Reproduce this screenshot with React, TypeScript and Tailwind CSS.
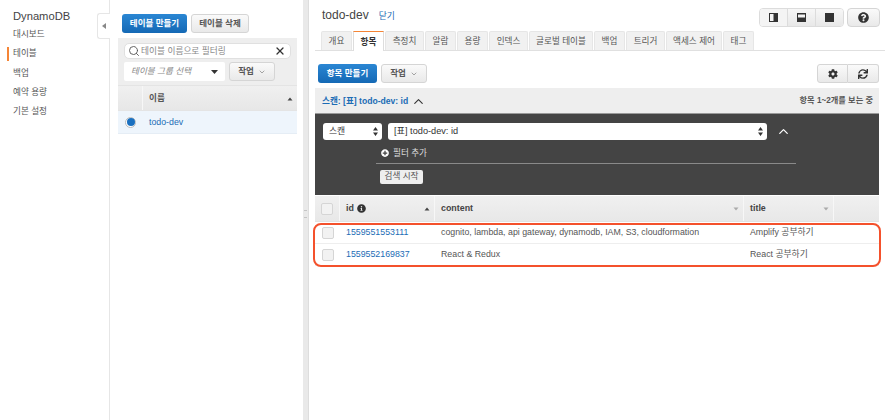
import { Search, X, ChevronDown, ChevronUp } from "lucide-react";
import { FaCog, FaSync, FaQuestionCircle, FaInfoCircle, FaPlusCircle } from "react-icons/fa";

const font = "font-['Liberation_Sans','Noto_Sans_CJK_KR',sans-serif]";

const navItems = ["대시보드", "테이블", "백업", "예약 용량", "기본 설정"];

const tabs = [
  { label: "개요", w: "w-[31px]" },
  { label: "항목", w: "w-[31px]", active: true },
  { label: "측정치", w: "w-[39px]" },
  { label: "알람", w: "w-[31px]" },
  { label: "용량", w: "w-[31px]" },
  { label: "인덱스", w: "w-[39px]" },
  { label: "글로벌 테이블", w: "w-[64px]" },
  { label: "백업", w: "w-[31px]" },
  { label: "트리거", w: "w-[39px]" },
  { label: "액세스 제어", w: "w-[56px]" },
  { label: "태그", w: "w-[31px]" },
];

const rows = [
  { id: "1559551553111", content: "cognito, lambda, api gateway, dynamodb, IAM, S3, cloudformation", title: "Amplify 공부하기" },
  { id: "1559552169837", content: "React & Redux", title: "React 공부하기" },
];

function GrayButton({ children, className = "" }: { children: React.ReactNode; className?: string }) {
  return (
    <button className={`flex h-[19px] items-center justify-center gap-1 rounded-[3px] border border-[#d5d5d5] bg-linear-to-b from-[#fafafa] to-[#e9e9e9] text-[8.5px] font-bold text-[#555] ${className}`}>
      {children}
    </button>
  );
}

function BlueButton({ children, className = "" }: { children: React.ReactNode; className?: string }) {
  return (
    <button className={`flex h-[19px] items-center justify-center rounded-[3px] bg-linear-to-b from-[#2a86d3] to-[#1469b5] text-[8.5px] font-bold text-white ${className}`}>
      {children}
    </button>
  );
}

function SortCaret({ up = false }: { up?: boolean }) {
  return (
    <svg width="6" height="4" viewBox="0 0 6 4" className={up ? "fill-[#444]" : "fill-[#aaa]"}>
      <path d={up ? "M3 0.5 L5.5 3.5 H0.5 Z" : "M0.5 0.5 H5.5 L3 3.5 Z"} />
    </svg>
  );
}

function UpDown() {
  return (
    <svg width="5" height="9" viewBox="0 0 5 9" className="fill-[#333]">
      <path d="M2.5 0 L5 3.6 H0 Z M2.5 9 L0 5.4 H5 Z" />
    </svg>
  );
}

function PaneIcon({ kind }: { kind: "left" | "bottom" | "full" }) {
  return (
    <svg width="9" height="9" viewBox="0 0 9 9">
      <rect x="0" y="0" width="9" height="9" fill="#333" />
      {kind === "left" && <rect x="1" y="1" width="3.5" height="7" fill="#f3f3f3" />}
      {kind === "bottom" && <rect x="1" y="1.5" width="7" height="3" fill="#f3f3f3" />}
    </svg>
  );
}

export default function App() {
  return (
    <div className={`flex h-[420px] w-[885px] overflow-hidden bg-white ${font} text-[#444]`}>
      {/* left nav */}
      <aside className="relative w-[110px] shrink-0 border-r border-[#e6e6e6] pt-[9px]">
        <div className="pl-[13px] text-[11.2px] leading-[15px] text-[#444]">DynamoDB</div>
        <nav className="mt-[1px] flex flex-col">
          {navItems.map((item) => (
            <div key={item} className="flex h-[19.25px] items-center text-[8.6px] text-[#555]">
              <span className={`mr-[4px] ml-[7px] h-[14px] w-[2px] ${item === "테이블" ? "bg-[#f58536]" : ""}`} />
              {item}
            </div>
          ))}
        </nav>
        <div className="absolute top-[13px] right-[-1px] flex h-[26px] w-[13px] items-center justify-center rounded-l-[3px] border border-r-0 border-[#e6e6e6] bg-white">
          <svg width="4" height="6" viewBox="0 0 4 6" className="fill-[#888]">
            <path d="M4 0 V6 L0 3 Z" />
          </svg>
        </div>
      </aside>

      {/* table list */}
      <section className="w-[193px] shrink-0 pt-[14px] pl-[8px]">
        <div className="flex gap-[4px] pl-[4px]">
          <BlueButton className="w-[65px]">테이블 만들기</BlueButton>
          <GrayButton className="w-[58px]">테이블 삭제</GrayButton>
        </div>
        <div className="mt-[5px] w-[179px]">
          <div className="bg-[#eeeeee] px-[6px] pt-[5px] pb-[4px]">
            <div className="flex h-[16px] items-center rounded-[5px] border border-[#e0e0e0] bg-white pr-[4px] pl-[3px]">
              <Search size={12} strokeWidth={1.8} className="text-[#555]" />
              <span className="ml-[1px] flex-1 pt-[1px] text-[8.7px] text-[#888]">테이블 이름으로 필터링</span>
              <X size={12} strokeWidth={2.6} className="text-[#333]" />
            </div>
            <div className="mt-[3px] flex gap-[4px]">
              <div className="flex h-[19px] w-[101px] items-center justify-between rounded-[2px] bg-white pr-[7px] pl-[7px]">
                <span className="text-[8.6px] text-[#888] italic">테이블 그룹 선택</span>
                <svg width="7" height="4" viewBox="0 0 7 4" className="fill-[#333]"><path d="M0 0 H7 L3.5 4 Z" /></svg>
              </div>
              <GrayButton className="w-[46px]">
                작업 <ChevronDown size={8} strokeWidth={1.5} />
              </GrayButton>
            </div>
          </div>
          <div className="flex h-[26px] border-y border-[#e4e4e4] bg-linear-to-b from-[#f0f0f0] to-[#e7e7e7]">
            <div className="w-[25px] border-r border-[#f7f7f7]" />
            <div className="flex flex-1 items-center justify-between pt-[1px] pr-[4px] pl-[6px] text-[8.6px] font-bold text-[#555]">
              이름 <SortCaret up />
            </div>
          </div>
          <div className="flex h-[23px] items-center border-b border-[#e5edf5] bg-[#eef5fc]">
            <div className="flex w-[25px] justify-center">
              <span className="flex h-[11px] w-[11px] items-center justify-center rounded-full border border-[#bbb] bg-white">
                <span className="h-[8px] w-[8px] rounded-full bg-[#1a70c0]" />
              </span>
            </div>
            <span className="pt-[1px] pl-[6px] text-[8.8px] text-[#1b6cb5]">todo-dev</span>
          </div>
        </div>
      </section>

      {/* splitter */}
      <div className="flex w-[6px] shrink-0 items-center justify-center border-r border-[#dddddd] bg-[#e9e9e9]">
        <div className="mt-[8px] h-[8px] w-[3px] border-y border-[#c4c4c4]" />
      </div>

      {/* detail */}
      <main className="flex-1 pl-[6px]">
        <div className="flex h-[31px] items-start justify-between pt-[8px] pr-[5px]">
          <div className="mt-[-2px] flex items-baseline pl-[7px]">
            <span className="text-[12px] text-[#444]">todo-dev</span>
            <span className="ml-[10px] text-[8.8px] text-[#1b6cb5]">닫기</span>
          </div>
          <div className="flex gap-[3px]">
            <div className="flex h-[19px] w-[85px] overflow-hidden rounded-[4px] border border-[#dcdcdc]">
              <div className="flex flex-1 items-center justify-center bg-[#f4f4f4]"><PaneIcon kind="left" /></div>
              <div className="flex flex-1 items-center justify-center border-x border-[#dcdcdc] bg-linear-to-b from-[#f7f7f7] to-[#e8e8e8]"><PaneIcon kind="bottom" /></div>
              <div className="flex flex-1 items-center justify-center bg-linear-to-b from-[#f7f7f7] to-[#e8e8e8]"><PaneIcon kind="full" /></div>
            </div>
            <GrayButton className="w-[33px] !rounded-[4px]">
              <FaQuestionCircle size={11} className="text-[#333]" />
            </GrayButton>
          </div>
        </div>

        <div className="flex h-[20px] gap-[1px] border-b border-[#e0e0e0] pl-[6px]">
          {tabs.map((t) => (
            <div
              key={t.label}
              className={`flex items-center justify-center pt-[1px] text-[8.6px] ${t.w} ${
                t.active
                  ? "h-[20px] border-x border-t border-x-[#ddd] border-t-[#f58536] bg-white font-bold text-[#333]"
                  : "h-[19px] rounded-t-[2px] border border-b-0 border-[#e6e6e6] bg-[#f1f1f1] text-[#555]"
              }`}
            >
              {t.label}
            </div>
          ))}
        </div>

        <div className="flex items-center justify-between pt-[13px] pr-[6px] pl-[3px]">
          <div className="flex gap-[4px]">
            <BlueButton className="w-[59px]">항목 만들기</BlueButton>
            <GrayButton className="w-[46px]">
              작업 <ChevronDown size={8} strokeWidth={1.5} />
            </GrayButton>
          </div>
          <div className="flex">
            <GrayButton className="w-[31px] !rounded-r-none">
              <FaCog size={10} className="text-[#333]" />
            </GrayButton>
            <GrayButton className="w-[31px] !rounded-l-none border-l-0">
              <FaSync size={10} className="text-[#333]" />
            </GrayButton>
          </div>
        </div>

        <div className="mt-[5px] mr-[6px]">
          <div className="flex h-[26px] items-center justify-between border-b border-[#999] bg-[#eeeeee] pt-[1px] pr-[6px] pl-[7px]">
            <div className="flex items-center gap-[3px] text-[8.6px] font-bold text-[#1b6cb5]">
              스캔: [표] todo-dev: id
              <ChevronUp size={15} strokeWidth={1.8} className="text-[#333]" />
            </div>
            <span className="text-[8.2px] font-bold text-[#555]">항목 1~2개를 보는 중</span>
          </div>

          <div className="h-[81px] bg-[#444444] pt-[9px]">
            <div className="flex items-center pl-[8px]">
              <div className="flex h-[17px] w-[59px] items-center justify-between rounded-[3px] bg-white pr-[4px] pl-[6px] text-[8.8px] text-[#333]">
                스캔 <UpDown />
              </div>
              <div className="ml-[6px] flex h-[17px] w-[379px] items-center justify-between rounded-[3px] bg-white pr-[4px] pl-[6px] text-[9.2px] text-[#333]">
                [표] todo-dev: id <UpDown />
              </div>
              <ChevronUp size={15} strokeWidth={2} className="ml-[9px] text-white" />
            </div>
            <div className="mt-[7px] ml-[61px] w-[420px] border-b border-[#8a8a8a] pb-[3px]">
              <div className="flex items-center gap-[4px] pl-[5px] text-[8.6px] text-[#ddd]">
                <FaPlusCircle size={8} className="text-white" />
                필터 추가
              </div>
            </div>
            <div className="mt-[6px] ml-[65px] flex h-[14px] w-[43px] items-center justify-center rounded-[2px] bg-[#eeeeee] text-[8.6px] text-[#555]">
              검색 시작
            </div>
          </div>

          <div className="relative">
            <div className="mt-[1px] flex h-[26px] border-b border-[#e2e2e2] bg-linear-to-b from-[#f0f0f0] to-[#e8e8e8] text-[8.9px] font-bold text-[#444]">
              <div className="flex w-[25px] items-center justify-center border-r border-[#f7f7f7]">
                <span className="h-[12px] w-[12px] rounded-[2px] border border-[#d5d5d5] bg-[#f2f2f2]" />
              </div>
              <div className="flex w-[95px] items-center justify-between border-r border-[#f7f7f7] pt-[1px] pr-[4px] pl-[6px]">
                <span className="flex items-center gap-[3px]">
                  id <FaInfoCircle size={9} className="text-[#333]" />
                </span>
                <SortCaret up />
              </div>
              <div className="flex w-[309px] items-center justify-between border-r border-[#f7f7f7] pt-[1px] pr-[4px] pl-[6px]">
                content <SortCaret />
              </div>
              <div className="flex w-[90px] items-center justify-between border-r border-[#f7f7f7] pt-[1px] pr-[4px] pl-[6px]">
                title <SortCaret />
              </div>
            </div>
            {rows.map((r) => (
              <div key={r.id} className="flex h-[22px] items-center border-b border-[#eeeeee] text-[8.8px] text-[#555]">
                <div className="flex w-[25px] justify-center">
                  <span className="h-[12px] w-[12px] rounded-[2px] border border-[#d5d5d5] bg-[#f2f2f2]" />
                </div>
                <div className="w-[95px] pl-[6px] text-[#1b6cb5]">{r.id}</div>
                <div className="w-[309px] pl-[6px]">{r.content}</div>
                <div className="pl-[6px]">{r.title}</div>
              </div>
            ))}
            {/* annotation outline drawn over the rows */}
            <div className="absolute top-[27px] left-[-2px] h-[44px] w-[568px] rounded-[8px] border-2 border-[#f4512c]" />
          </div>
        </div>
      </main>
    </div>
  );
}
